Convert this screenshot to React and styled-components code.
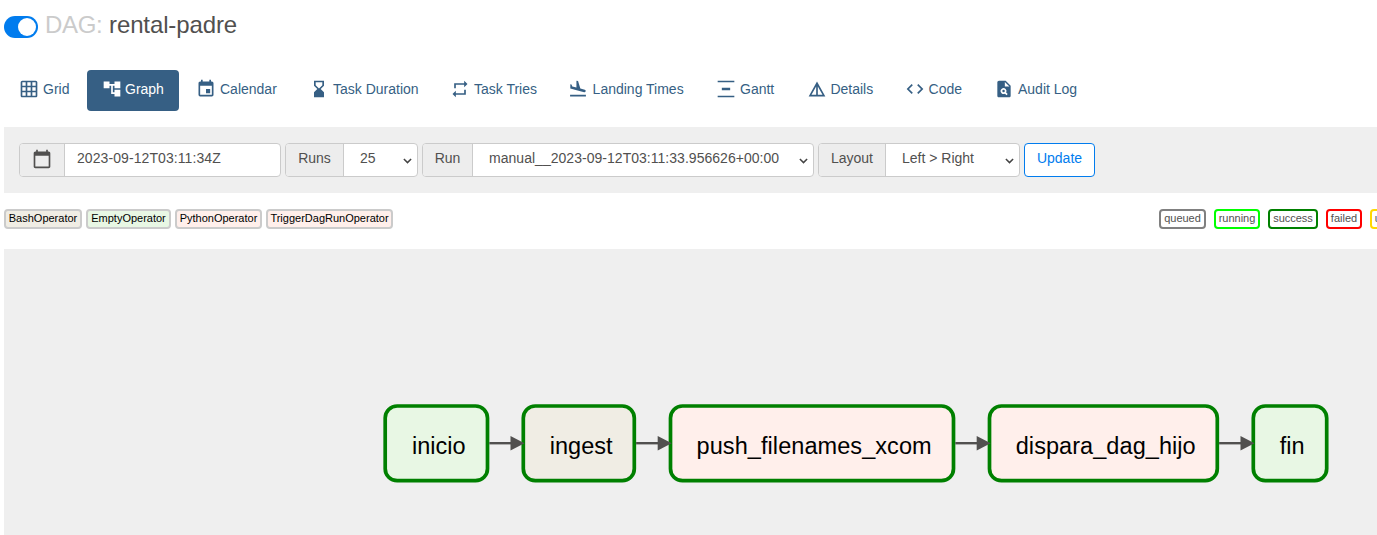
import React from "react";
import styled, { createGlobalStyle } from "styled-components";
import {
  MdGridOn,
  MdAccountTree,
  MdEvent,
  MdHourglassBottom,
  MdRepeat,
  MdFlightLand,
  MdVerticalDistribute,
  MdDetails,
  MdCode,
  MdPlagiarism,
  MdCalendarToday,
} from "react-icons/md";

const GlobalStyle = createGlobalStyle`
  * { box-sizing: border-box; }
  html, body { margin: 0; background: #fff; overflow: hidden; }
  body {
    font-family: "Liberation Sans", Arial, sans-serif;
    font-size: 14px;
    line-height: 20px;
    color: #51504f;
  }
`;

const Page = styled.main`
  height: 535px;
  padding-left: 4px;
  display: flex;
  flex-direction: column;
  overflow: hidden;
`;

const Header = styled.header`
  display: flex;
  align-items: flex-start;
  height: 70px;
  padding-top: 11px;
`;

const Toggle = styled.span`
  display: flex;
  justify-content: flex-end;
  width: 34px;
  height: 22px;
  margin: 5px 7px 0 0;
  padding: 2px;
  border-radius: 11px;
  background: #017cee;
  &::after {
    content: "";
    width: 18px;
    height: 18px;
    border-radius: 50%;
    background: #fff;
  }
`;

const Title = styled.h1`
  margin: 0;
  font-size: 24px;
  line-height: 28px;
  font-weight: 400;
  letter-spacing: -0.12px;
`;

const Muted = styled.span`
  color: #cbcbcb;
  letter-spacing: -0.3px;
`;

const Tabs = styled.nav`
  display: flex;
  gap: 2px;
  height: 57px;
  flex: none;
`;

const Tab = styled.a`
  display: flex;
  align-items: flex-start;
  flex: none;
  gap: ${(p) => p.$gap}px;
  width: ${(p) => p.$width}px;
  height: 41px;
  padding: 9px 0 0 15px;
  border-radius: 4px;
  white-space: nowrap;
  color: ${(p) => (p.$active ? "#fff" : "#365f84")};
  background: ${(p) => (p.$active ? "#365f84" : "transparent")};
  svg { flex: none; width: 20px; height: 20px; }
`;

const FilterBar = styled.form`
  display: flex;
  gap: 4px;
  flex: none;
  height: 66px;
  padding: 16px 15px;
  background: #efefef;
`;

const Group = styled.div`
  display: flex;
  width: ${(p) => p.$width}px;
  height: 34px;
  border: 1px solid #cbcbcb;
  border-radius: 4px;
  overflow: hidden;
  background: #fff;
`;

const Addon = styled.span`
  display: flex;
  align-items: center;
  justify-content: center;
  width: ${(p) => p.$width}px;
  padding-bottom: 4px;
  border-right: 1px solid #cbcbcb;
  background: #ededed;
  svg { width: 20px; height: 20px; margin-top: 2px; }
`;

const Field = styled.span`
  display: flex;
  flex: 1;
  align-items: center;
  justify-content: space-between;
  padding: 0 5px 4px ${(p) => p.$pad || 16}px;
  letter-spacing: ${(p) => p.$spacing || 0}px;
  white-space: nowrap;
  svg { width: 9px; height: 6px; margin-top: 6px; }
`;

const UpdateButton = styled.button`
  width: 71px;
  height: 34px;
  padding: 0 0 4px;
  border: 1px solid #017cee;
  border-radius: 4px;
  background: #fff;
  color: #017cee;
  font: inherit;
`;

const Legend = styled.section`
  display: flex;
  justify-content: space-between;
  flex: none;
  height: 56px;
  padding-top: 16px;
`;

const TagList = styled.div`
  display: flex;
  gap: ${(p) => p.$gap}px;
  margin-right: ${(p) => (p.$bleed ? "-62px" : 0)};
`;

const Tag = styled.span`
  flex: none;
  width: ${(p) => p.$width}px;
  height: 20px;
  border: 2px solid ${(p) => p.$border || "#cbcbcb"};
  border-radius: 4px;
  background: ${(p) => p.$fill || "#fff"};
  color: ${(p) => (p.$fill ? "#000" : "#51504f")};
  font-size: 11px;
  line-height: 15px;
  text-align: center;
  white-space: nowrap;
`;

const Canvas = styled.section`
  flex: 1;
  background: #efefef;
  svg { display: block; }
  text { font-size: 23.5px; fill: #000; }
`;

const Chevron = () => (
  <svg viewBox="0 0 10 6" fill="none" stroke="#444" strokeWidth="1.7">
    <path d="M1 .8 5 4.8 9 .8" />
  </svg>
);

const tabs = [
  { label: "Grid", icon: MdGridOn, width: 81 },
  { label: "Graph", icon: MdAccountTree, width: 92, gap: 3, active: true },
  { label: "Calendar", icon: MdEvent, width: 111 },
  { label: "Task Duration", icon: MdHourglassBottom, width: 139 },
  { label: "Task Tries", icon: MdRepeat, width: 116 },
  { label: "Landing Times", icon: MdFlightLand, width: 146, gap: 4.6 },
  { label: "Gantt", icon: MdVerticalDistribute, width: 89 },
  { label: "Details", icon: MdDetails, width: 96, gap: 3.4 },
  { label: "Code", icon: MdCode, width: 87, gap: 3.6 },
  { label: "Audit Log", icon: MdPlagiarism, width: 112 },
];

const operators = [
  { label: "BashOperator", fill: "#f0ede4", width: 78 },
  { label: "EmptyOperator", fill: "#e8f7e4", width: 85 },
  { label: "PythonOperator", fill: "#ffefeb", width: 87 },
  { label: "TriggerDagRunOperator", fill: "#ffefeb", width: 127 },
];

const states = [
  { label: "queued", color: "#808080", width: 47 },
  { label: "running", color: "#01ff00", width: 46 },
  { label: "success", color: "#008000", width: 50 },
  { label: "failed", color: "#ff0000", width: 36 },
  { label: "up_for_retry", color: "#ffd700", width: 69 },
];

const nodes = [
  { label: "inicio", x: 381.2, w: 102.3, tx: 408, tw: 53.5, fill: "#e8f7e4" },
  { label: "ingest", x: 519.3, w: 111, tx: 545.8, tw: 62.7, fill: "#f0ede4" },
  { label: "push_filenames_xcom", x: 666.5, w: 283, tx: 692.6, tw: 235, fill: "#ffefeb" },
  { label: "dispara_dag_hijo", x: 985.5, w: 227.8, tx: 1011.7, tw: 180, fill: "#ffefeb" },
  { label: "fin", x: 1249.3, w: 73.4, tx: 1275.8, tw: 24.8, fill: "#e8f7e4" },
];

const Graph = () => (
  <svg width="1373" height="286">
    {nodes.map((n) => (
      <g key={n.label}>
        <rect x={n.x} y="157" width={n.w} height="74.7" rx="12" fill={n.fill} stroke="#008000" strokeWidth="3.7" />
        <text x={n.tx} y="205" textLength={n.tw}>{n.label}</text>
      </g>
    ))}
    {nodes.slice(1).map((n, i) => {
      const start = nodes[i].x + nodes[i].w + 1.8;
      return (
        <g key={n.label} fill="#51504f">
          <rect x={start} y="193" width={n.x - start - 8} height="2.4" />
          <path d={`M${n.x - 12.8} 187 l14 7.2 l-14 7.2z`} />
        </g>
      );
    })}
  </svg>
);

export default function App() {
  return (
    <Page>
      <GlobalStyle />
      <Header>
        <Toggle />
        <Title><Muted>DAG:</Muted> rental-padre</Title>
      </Header>
      <Tabs>
        {tabs.map(({ label, icon: Icon, width, gap = 4, active }) => (
          <Tab key={label} $width={width} $active={active} $gap={gap}>
            <Icon />{label}
          </Tab>
        ))}
      </Tabs>
      <FilterBar>
        <Group $width={262}>
          <Addon $width={45}><MdCalendarToday /></Addon>
          <Field $pad={12} $spacing={0.08}>2023-09-12T03:11:34Z</Field>
        </Group>
        <Group $width={133}>
          <Addon $width={58}>Runs</Addon>
          <Field>25<Chevron /></Field>
        </Group>
        <Group $width={392}>
          <Addon $width={50}>Run</Addon>
          <Field $spacing={0.03}>manual__2023-09-12T03:11:33.956626+00:00<Chevron /></Field>
        </Group>
        <Group $width={202}>
          <Addon $width={67}>Layout</Addon>
          <Field>Left &gt; Right<Chevron /></Field>
        </Group>
        <UpdateButton type="button">Update</UpdateButton>
      </FilterBar>
      <Legend>
        <TagList $gap={4}>
          {operators.map((o) => (
            <Tag key={o.label} $fill={o.fill} $width={o.width}>{o.label}</Tag>
          ))}
        </TagList>
        <TagList $gap={8} $bleed>
          {states.map((s) => (
            <Tag key={s.label} $border={s.color} $width={s.width}>{s.label}</Tag>
          ))}
        </TagList>
      </Legend>
      <Canvas><Graph /></Canvas>
    </Page>
  );
}
